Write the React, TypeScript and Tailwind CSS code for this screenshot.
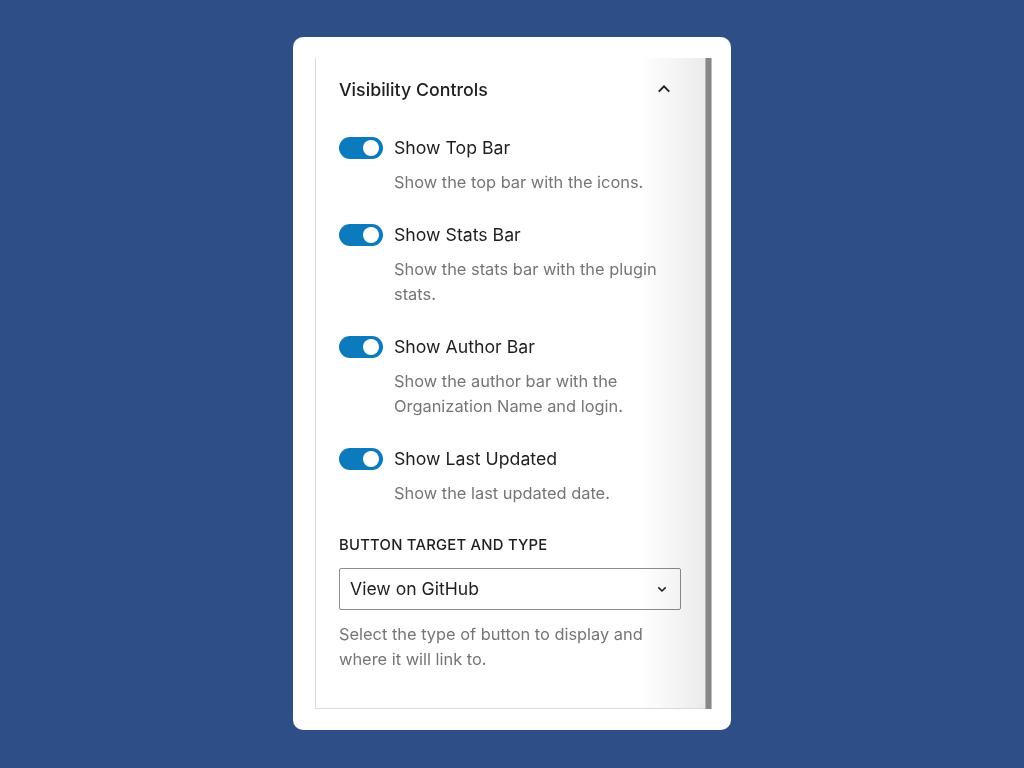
import React from "react";

function Toggle() {
  return (
    <div className="relative h-[22px] w-[44px] shrink-0 rounded-full bg-[#0b7bbd]">
      <div className="absolute right-[4px] top-[3px] h-[16px] w-[16px] rounded-full bg-white" />
    </div>
  );
}

const items = [
  { label: "Show Top Bar", desc: ["Show the top bar with the icons."] },
  { label: "Show Stats Bar", desc: ["Show the stats bar with the plugin", "stats."] },
  { label: "Show Author Bar", desc: ["Show the author bar with the", "Organization Name and login."] },
  { label: "Show Last Updated", desc: ["Show the last updated date."] },
];

export default function App() {
  return (
    <div
      className="flex min-h-screen w-full items-start justify-center bg-[#2d4e86] pt-[37px]"
      style={{ fontFamily: "Inter, 'Noto Sans', sans-serif" }}
    >
      <div className="flex w-[438px] rounded-[10px] bg-white pb-[21px] pl-[22px] pr-[21px] pt-[21px]">
        <div className="relative flex h-[651px] w-full">
          <div className="relative flex-1 border-b border-l border-[#dcdcdc]">
            <div className="flex h-[65px] items-center justify-between pl-[23px] pr-[32px]">
              <span className="text-[17.8px] font-medium text-[#1e1e1e]">Visibility Controls</span>
              <svg width="18" height="18" viewBox="0 0 24 24" fill="none" className="-mt-[3px]">
                <path d="M5 15.5l7-7 7 7" stroke="#1e1e1e" strokeWidth="2.4" />
              </svg>
            </div>
            <div className="pl-[23px] pr-[24px] pt-[13px]">
              {items.map((it) => (
                <div key={it.label} className="mb-[28px]">
                  <div className="flex h-[24px] items-center gap-[11px]">
                    <Toggle />
                    <span className="text-[17.7px] text-[#1e1e1e]">{it.label}</span>
                  </div>
                  <div className="mt-[10px] pl-[55px] text-[16.4px] leading-[25px] text-[#757575]">
                    {it.desc.map((d) => (
                      <div key={d}>{d}</div>
                    ))}
                  </div>
                </div>
              ))}
              <div className="pt-[1px]">
                <div className="h-[20px] text-[14.8px] font-medium leading-[20px] tracking-[0.25px] text-[#1e1e1e]">
                  BUTTON TARGET AND TYPE
                </div>
              </div>
              <div className="mt-[13px] flex h-[42px] w-[342px] items-center justify-between rounded-[2px] border border-[#8c8c8c] bg-white pl-[10px] pr-[10px]">
                <span className="text-[17.6px] text-[#1e1e1e]">View on GitHub</span>
                <svg width="16" height="16" viewBox="0 0 24 24" fill="none">
                  <path d="M6.5 9.5l5.5 5.5 5.5-5.5" stroke="#1e1e1e" strokeWidth="2.3" />
                </svg>
              </div>
              <div className="mt-[12px] text-[16.4px] leading-[25px] text-[#757575]">
                <div>Select the type of button to display and</div>
                <div>where it will link to.</div>
              </div>
            </div>
            <div className="pointer-events-none absolute bottom-0 right-0 top-0 w-[65px] bg-[linear-gradient(to_right,rgba(0,0,0,0),rgba(0,0,0,0.08))] mix-blend-multiply" />
          </div>
          <div className="flex w-[7px] shrink-0">
            <div className="w-[1px] bg-[#b5b5b5]" />
            <div className="w-[5px] bg-[#878787]" />
            <div className="w-[1px] bg-[#bcbcbc]" />
          </div>
        </div>
      </div>
    </div>
  );
}
